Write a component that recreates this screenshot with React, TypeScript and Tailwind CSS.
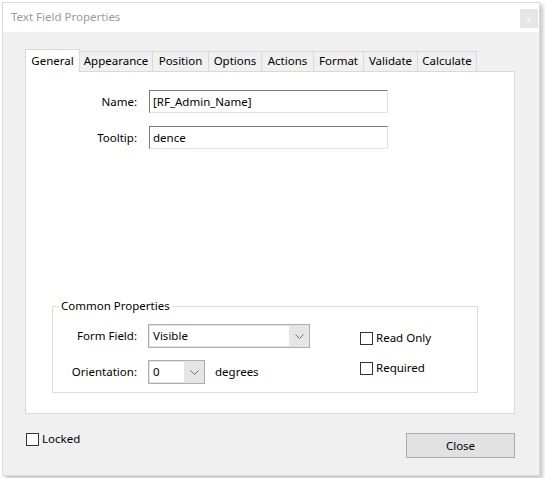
import React from "react";

const font = "font-['Segoe_UI','Noto_Sans',sans-serif]";

function Chevron() {
  return (
    <svg width="9" height="5" viewBox="0 0 9 5" className="block">
      <path d="M0.5 0.5 L4.5 4.5 L8.5 0.5" fill="none" stroke="#6d6d6d" strokeWidth="1" />
    </svg>
  );
}

function Select({ value, width, field }: { value: string; width: string; field: string }) {
  return (
    <div className={`flex h-[24px] items-stretch border border-[#adadad] bg-[#e5e5e5] ${width}`}>
      <div className={`m-[1px] flex items-center bg-white pl-[3px] ${field}`}>{value}</div>
      <div className="flex flex-1 items-center justify-center pt-px">
        <Chevron />
      </div>
    </div>
  );
}

function Checkbox({ label }: { label: string }) {
  return (
    <label className="flex h-[13px] items-center gap-[3px]">
      <span className="h-[13px] w-[13px] shrink-0 border border-[#333] bg-white" />
      <span className="-mt-[1px]">{label}</span>
    </label>
  );
}

function TextInput({ value }: { value: string }) {
  return (
    <div className="flex h-[23px] w-[239px] items-center border border-t-[#7a7a7a] border-l-[#7a7a7a] border-r-[#e3e3e3] border-b-[#e3e3e3] bg-white pl-[3px]">
      {value}
    </div>
  );
}

const tabs = [
  { label: "Appearance", w: "w-[73px]" },
  { label: "Position", w: "w-[56px]" },
  { label: "Options", w: "w-[53px]" },
  { label: "Actions", w: "w-[52px]" },
  { label: "Format", w: "w-[50px]" },
  { label: "Validate", w: "w-[54px]" },
  { label: "Calculate", w: "w-[59px]" },
];

export default function App() {
  return (
    <div className={`h-[478px] w-[545px] overflow-hidden bg-white pl-[2px] pt-[2px] text-[11.5px] text-black ${font}`}>
      <div className="flex h-[474px] w-[538px] flex-col border border-[#dadada] bg-[#f0f0f0] shadow-[3px_3px_4px_rgba(0,0,0,0.22)]">
        <div className="flex h-[29px] items-center justify-between bg-white pl-[8px] pr-[1px]">
          <span className="-mt-[1px] text-[#9a9a9a]">Text Field Properties</span>
          <div className="mt-[6px] flex h-[19px] w-[18px] items-center justify-center self-start bg-[#e6e6e6] text-[10px] leading-none text-[#f8f8f8]">
            x
          </div>
        </div>

        <div className="flex flex-1 flex-col pl-[22px] pr-[24px] pt-[17px]">
          <div className="flex h-[22px] items-end">
            <div className="relative z-10 -mb-px flex h-[23px] w-[55px] items-start justify-center border border-b-0 border-[#d9d9d9] bg-white pt-[2px]">
              General
            </div>
            {tabs.map((t) => (
              <div
                key={t.label}
                className={`flex h-[20px] items-center justify-center border-r border-t border-[#d9d9d9] bg-[#f0f0f0] pb-px ${t.w}`}
              >
                {t.label}
              </div>
            ))}
          </div>

          <div className="flex h-[343px] flex-col border border-[#d9d9d9] bg-white">
            <div className="mt-[18px] flex items-center">
              <span className="w-[112px] pr-[1px] text-right">Name:</span>
              <div className="ml-[11px]">
                <TextInput value="[RF_Admin_Name]" />
              </div>
            </div>
            <div className="mt-[13px] flex items-center">
              <span className="w-[112px] pr-[1px] text-right">Tooltip:</span>
              <div className="ml-[11px]">
                <TextInput value="dence" />
              </div>
            </div>

            <fieldset className="mb-[20px] ml-[26px] mt-auto h-[94px] w-[426px] border border-[#dcdcdc] pl-[0px]">
              <legend className="ml-[6px] px-[2px] leading-[14px]">Common Properties</legend>
              <div className="flex pt-[11px]">
                <div className="flex flex-col gap-[12px]">
                  <div className="flex items-center">
                    <span className="w-[84px] text-right">Form Field:</span>
                    <div className="ml-[11px]">
                      <Select value="Visible" width="w-[162px]" field="w-[139px]" />
                    </div>
                  </div>
                  <div className="flex items-center">
                    <span className="w-[84px] text-right">Orientation:</span>
                    <div className="ml-[11px]">
                      <Select value="0" width="w-[57px]" field="w-[34px]" />
                    </div>
                    <span className="ml-[10px]">degrees</span>
                  </div>
                </div>
                <div className="ml-[50px] flex flex-col gap-[17px] pt-[8px]">
                  <Checkbox label="Read Only" />
                  <Checkbox label="Required" />
                </div>
              </div>
            </fieldset>
          </div>

          <div className="mt-[19px] flex items-start justify-between pl-px">
            <div>
              <Checkbox label="Locked" />
            </div>
            <button className="h-[25px] w-[109px] border border-[#adadad] bg-[#e1e1e1]">Close</button>
          </div>
        </div>
      </div>
    </div>
  );
}
